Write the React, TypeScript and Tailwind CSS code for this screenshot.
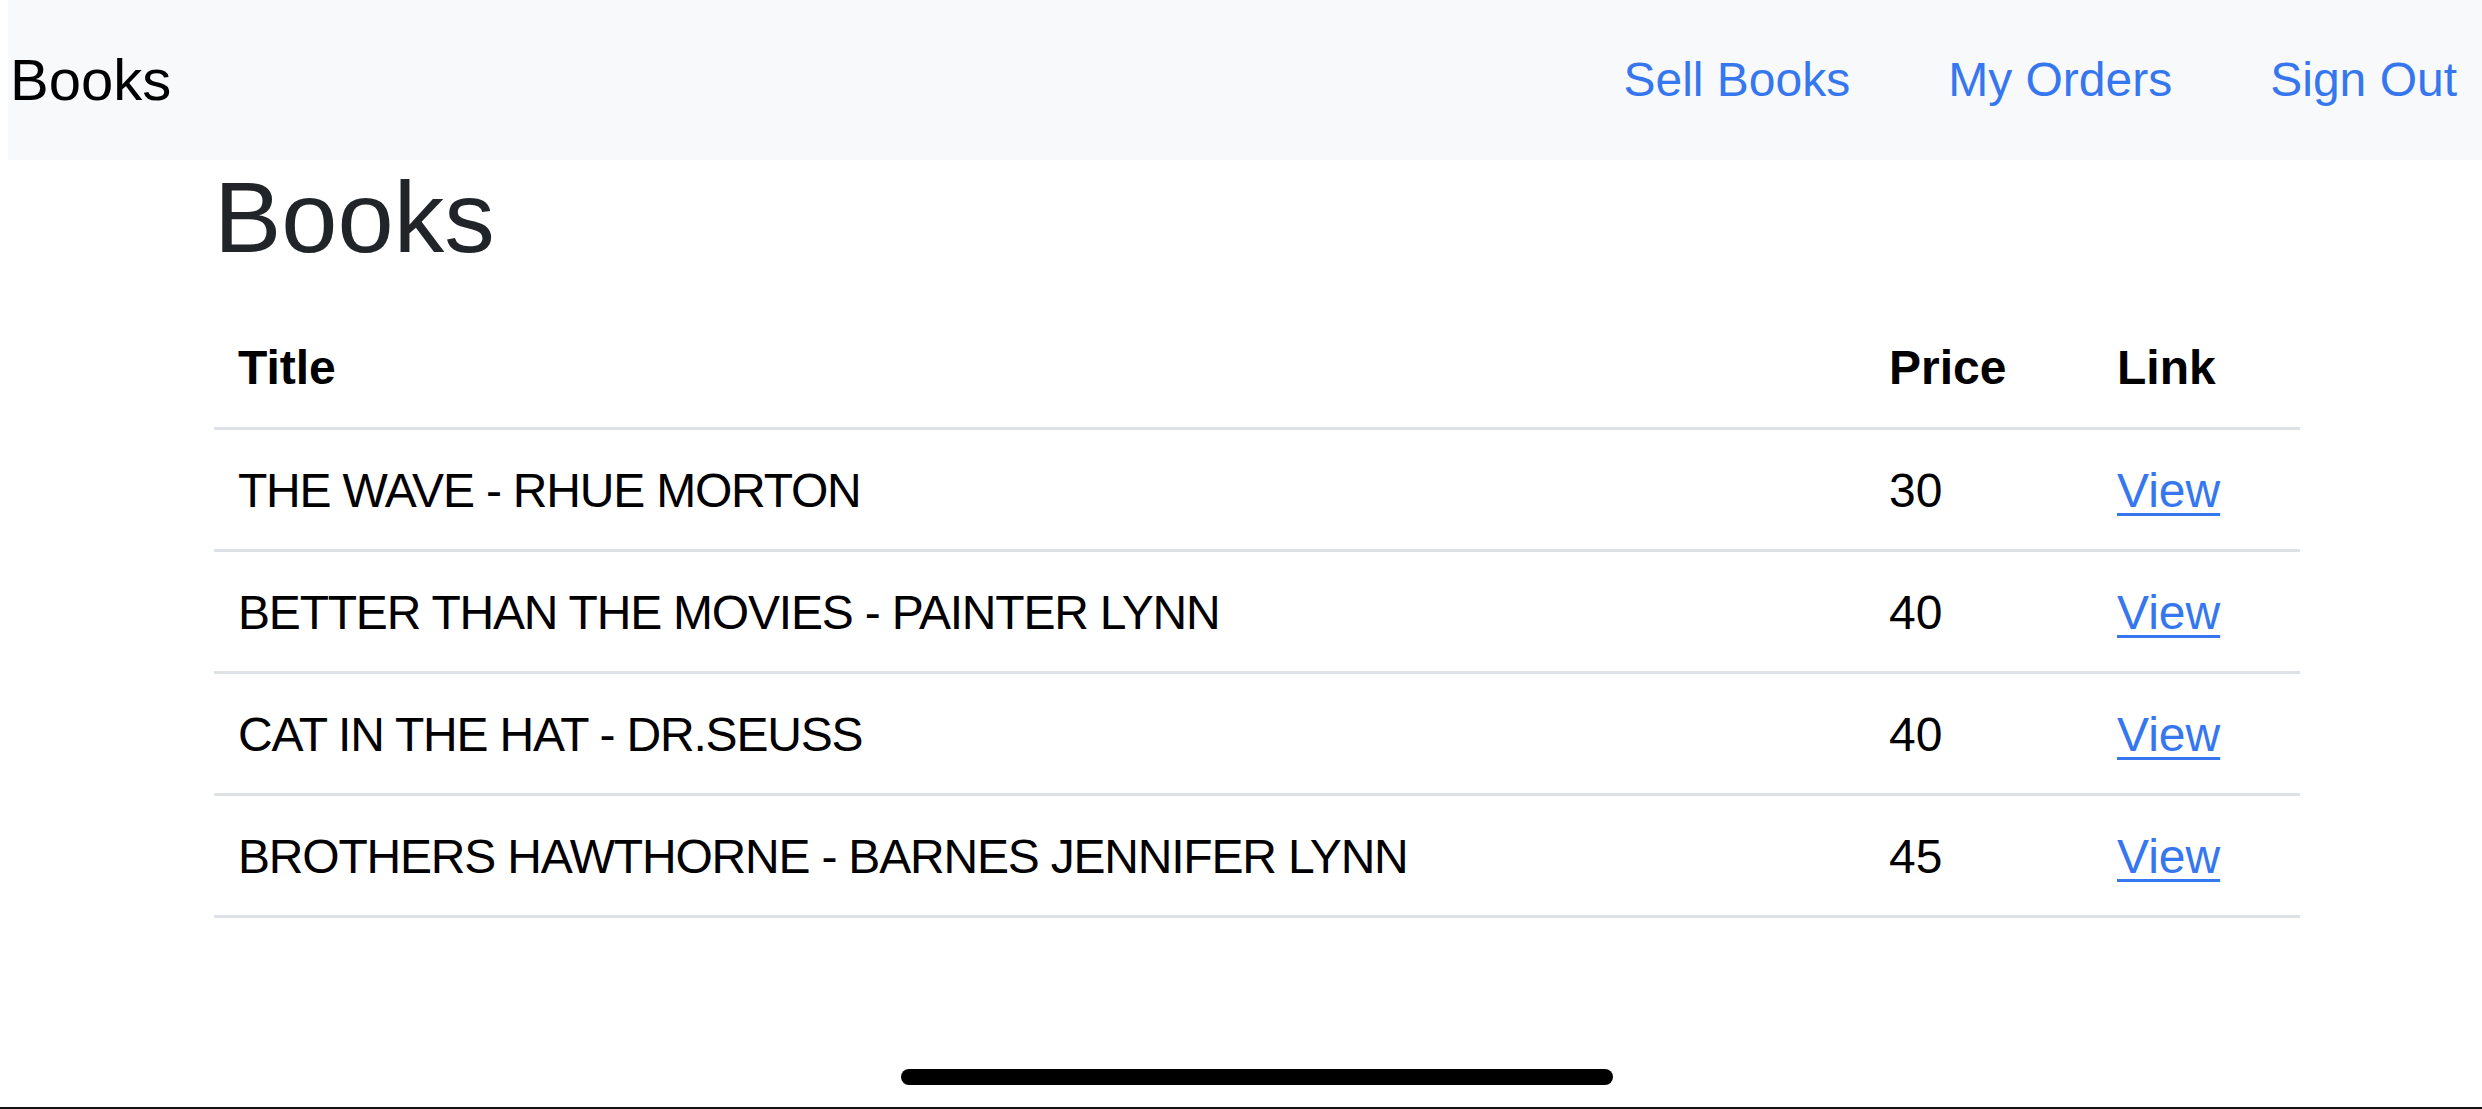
const books = [
  { title: 'THE WAVE - RHUE MORTON', price: 30 },
  { title: 'BETTER THAN THE MOVIES - PAINTER LYNN', price: 40 },
  { title: 'CAT IN THE HAT - DR.SEUSS', price: 40 },
  { title: 'BROTHERS HAWTHORNE - BARNES JENNIFER LYNN', price: 45 },
];

export default function App() {
  return (
    <div className="h-[1109px] flex flex-col bg-white font-['Liberation_Sans',Arial,sans-serif]">
      <nav className="ml-[8px] h-[160px] bg-[#f8f9fa] flex items-center justify-between pl-[2px] pr-[25px]">
        <span className="text-[58px] text-black leading-none">Books</span>
        <div className="flex items-center gap-[98px] text-[48px] text-[#3677ef] leading-none">
          <a href="#">Sell Books</a>
          <a href="#">My Orders</a>
          <a href="#">Sign Out</a>
        </div>
      </nav>

      <main className="ml-[214px] w-[2086px]">
        <h1 className="mt-[7px] mb-[38px] text-[101px] leading-none text-[#212529]">Books</h1>
        <table className="w-full border-collapse text-[48px] text-black">
          <thead>
            <tr className="border-b-[3px] border-[#dee2e6]">
              <th className="h-[122px] w-[1651px] px-[24px] pt-[4px] text-left font-bold">Title</th>
              <th className="h-[122px] w-[228px] px-[24px] pt-[4px] text-left font-bold">Price</th>
              <th className="h-[122px] px-[24px] pt-[4px] text-left font-bold">Link</th>
            </tr>
          </thead>
          <tbody>
            {books.map((b) => (
              <tr key={b.title} className="border-b-[3px] border-[#dee2e6]">
                <td className="h-[122px] px-[24px] pt-[4px] tracking-[-1.2px]">{b.title}</td>
                <td className="h-[122px] px-[24px] pt-[4px]">{b.price}</td>
                <td className="h-[122px] px-[24px] pt-[4px]">
                  <a href="#" className="text-[#3677ef] underline decoration-[3px] underline-offset-[6px]">
                    View
                  </a>
                </td>
              </tr>
            ))}
          </tbody>
        </table>
      </main>

      <div className="flex-1" />
      <div className="ml-[901px] w-[712px] h-[16px] rounded-full bg-black mb-[22px]" />
      <div className="h-[2px] bg-[#111]" />
    </div>
  );
}
